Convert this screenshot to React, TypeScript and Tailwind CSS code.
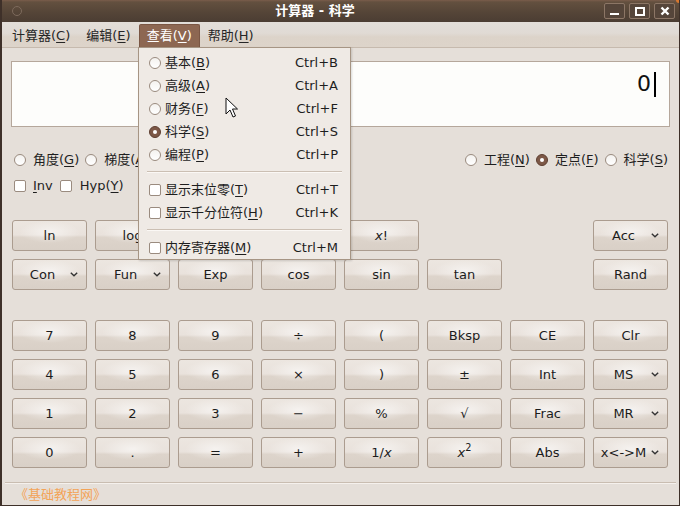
import React from "react";

const Chevron = () => (
  <svg width="8" height="5" viewBox="0 0 8 5" className="shrink-0">
    <path d="M0.8 0.8 L4 3.8 L7.2 0.8" fill="none" stroke="#333" strokeWidth="1.4" />
  </svg>
);

const btnBg =
  "bg-[radial-gradient(ellipse_42%_38%_at_50%_38%,rgba(255,255,255,0.55),rgba(255,255,255,0)),linear-gradient(#ece6e0_0%,#e9e2dc_48%,#ddd4cb_56%,#d9d0c7_100%)]";

const Btn = ({ children, dd }: { children?: React.ReactNode; dd?: boolean }) =>
  dd ? (
    <div
      className={`h-[31px] rounded-[3px] border border-[#ab9c8f] ${btnBg} flex items-center pl-[2px] pr-[8px] text-[13px] text-[#1c1c1c]`}
    >
      <span className="flex-1 text-center whitespace-nowrap">{children}</span>
      <Chevron />
    </div>
  ) : (
    <div
      className={`h-[31px] rounded-[3px] border border-[#ab9c8f] ${btnBg} flex items-center justify-center text-[13px] text-[#1c1c1c] whitespace-nowrap`}
    >
      {children}
    </div>
  );

const Empty = () => <div className="h-[31px]" />;

const Radio = ({ checked }: { checked?: boolean }) =>
  checked ? (
    <span className="w-[12px] h-[12px] rounded-full bg-[#7d5847] border border-[#5e3f31] flex items-center justify-center shrink-0">
      <span className="w-[4px] h-[4px] rounded-full bg-white" />
    </span>
  ) : (
    <span className="w-[12px] h-[12px] rounded-full bg-[linear-gradient(#f4f2ef,#ffffff)] border border-[#9a8b7f] shrink-0" />
  );

const Check = () => (
  <span className="w-[12px] h-[12px] rounded-[2px] bg-white border border-[#9a8b7f] shrink-0" />
);

const M = ({ t, k }: { t: string; k: string }) => (
  <span className="whitespace-nowrap">
    {t}(<span className="underline underline-offset-2">{k}</span>)
  </span>
);

const MenuItem = ({
  ind,
  label,
  k,
  sc,
}: {
  ind: React.ReactNode;
  label: string;
  k: string;
  sc: string;
}) => (
  <div className="h-[23px] flex items-center pl-[10px] pr-[12px]">
    {ind}
    <span className="ml-[4px] flex-1">
      <M t={label} k={k} />
    </span>
    <span>{sc}</span>
  </div>
);

const Sep = () => (
  <div className="h-[12px] flex flex-col justify-center px-[8px]">
    <div className="h-[1px] bg-[#cbbfb3]" />
    <div className="h-[1px] bg-[#fbf8f5]" />
  </div>
);

export default function App() {
  return (
    <div className="w-[680px] h-[506px] relative overflow-hidden bg-[#e5dfd9] flex flex-col font-['DejaVu_Sans','Noto_Sans_CJK_SC',sans-serif] text-[13px] text-[#1e1e1e] border-l-2 border-r border-b border-[#3e3029]">
      {/* title bar */}
      <div className="h-[22px] shrink-0 flex items-center bg-[linear-gradient(#7a5d4b_0px,#63503f_2px,#544437_60%,#4b3d33_100%)] relative">
        <div className="w-[30px] flex items-center pl-[10px]">
          <span className="w-[10px] h-[10px] rounded-full border border-[#7d6a5c]" />
        </div>
        <div className="flex-1 text-center text-white font-bold text-[13px] pr-[6px]">
          计算器 - 科学
        </div>
        <div className="flex items-center gap-[4px] pr-[4px]">
          <div className="w-[21px] h-[16px] rounded-[2px] border border-[#8c7666] bg-[#55453a] flex items-end justify-center pb-[3px]">
            <span className="w-[9px] h-[2px] bg-white" />
          </div>
          <div className="w-[21px] h-[16px] rounded-[2px] border border-[#8c7666] bg-[#55453a] flex items-center justify-center">
            <span className="w-[10px] h-[9px] border-2 border-white" />
          </div>
          <div className="w-[21px] h-[16px] rounded-[2px] border border-[#8c7666] bg-[#55453a] flex items-center justify-center">
            <svg width="10" height="10" viewBox="0 0 10 10">
              <path d="M1.5 1.5 L8.5 8.5 M8.5 1.5 L1.5 8.5" stroke="white" strokeWidth="2.4" />
            </svg>
          </div>
        </div>
        <div className="absolute right-0 top-0 w-[3px] h-[3px] bg-[#d8782f] rounded-bl-full" />
      </div>

      {/* menu bar */}
      <div className="h-[26px] shrink-0 flex items-start pt-[2px] pl-[2px] bg-[linear-gradient(#e3ded9_0%,#e0dad4_45%,#dcd3c9_60%,#ddd4ca_100%)] border-b border-[#c6baae] text-[#262626]">
        <div className="h-[23px] px-[8px] flex items-center">
          <M t="计算器" k="C" />
        </div>
        <div className="h-[23px] px-[8px] flex items-center">
          <M t="编辑" k="E" />
        </div>
        <div className="h-[23px] px-[7px] flex items-center bg-[#8d6752] text-white rounded-t-[2px] border border-[#7a5644] border-b-0">
          <M t="查看" k="V" />
        </div>
        <div className="h-[23px] px-[8px] flex items-center">
          <M t="帮助" k="H" />
        </div>
      </div>

      {/* display */}
      <div className="mt-[13px] mx-[9px] h-[66px] shrink-0 bg-[#fdfdfb] border border-[#b5a79b] flex justify-end items-start pt-[9px] pr-[13px]">
        <span className="text-[22px] leading-[26px] text-[#111] font-['DejaVu_Sans',sans-serif]">0</span>
        <span className="ml-[3px] mt-[1px] w-[2px] h-[25px] bg-black" />
      </div>

      {/* radio row */}
      <div className="mt-[23px] h-[20px] shrink-0 flex items-center pl-[12px] pr-[11px]">
        <Radio />
        <span className="ml-[7px] mr-[6px]">
          <M t="角度" k="G" />
        </span>
        <Radio />
        <span className="ml-[7px] mr-[6px]">
          <M t="梯度" k="A" />
        </span>
        <div className="flex-1" />
        <Radio />
        <span className="ml-[7px] mr-[6px]">
          <M t="工程" k="N" />
        </span>
        <Radio checked />
        <span className="ml-[7px] mr-[6px]">
          <M t="定点" k="F" />
        </span>
        <Radio />
        <span className="ml-[7px]">
          <M t="科学" k="S" />
        </span>
      </div>

      {/* checkbox row */}
      <div className="mt-[6px] h-[20px] shrink-0 flex items-center pl-[12px]">
        <Check />
        <span className="ml-[7px] mr-[7px]">
          <span className="underline underline-offset-2">I</span>nv
        </span>
        <Check />
        <span className="ml-[8px]">
          Hyp(<span className="underline underline-offset-2">Y</span>)
        </span>
      </div>

      {/* scientific buttons */}
      <div className="mt-[24px] pl-[10px] grid grid-cols-[repeat(8,75px)] gap-x-[8px] gap-y-[8px] shrink-0">
        <Btn>ln</Btn>
        <Btn>log</Btn>
        <Btn />
        <Btn />
        <Btn>
          <i>x</i>!
        </Btn>
        <Empty />
        <Empty />
        <Btn dd>Acc</Btn>

        <Btn dd>Con</Btn>
        <Btn dd>Fun</Btn>
        <Btn>Exp</Btn>
        <Btn>cos</Btn>
        <Btn>sin</Btn>
        <Btn>tan</Btn>
        <Empty />
        <Btn>Rand</Btn>
      </div>

      {/* number buttons */}
      <div className="mt-[30px] pl-[10px] grid grid-cols-[repeat(8,75px)] gap-x-[8px] gap-y-[8px] shrink-0">
        <Btn>7</Btn>
        <Btn>8</Btn>
        <Btn>9</Btn>
        <Btn>÷</Btn>
        <Btn>(</Btn>
        <Btn>Bksp</Btn>
        <Btn>CE</Btn>
        <Btn>Clr</Btn>

        <Btn>4</Btn>
        <Btn>5</Btn>
        <Btn>6</Btn>
        <Btn>×</Btn>
        <Btn>)</Btn>
        <Btn>±</Btn>
        <Btn>Int</Btn>
        <Btn dd>MS</Btn>

        <Btn>1</Btn>
        <Btn>2</Btn>
        <Btn>3</Btn>
        <Btn>−</Btn>
        <Btn>%</Btn>
        <Btn>√</Btn>
        <Btn>Frac</Btn>
        <Btn dd>MR</Btn>

        <Btn>0</Btn>
        <Btn>.</Btn>
        <Btn>=</Btn>
        <Btn>+</Btn>
        <Btn>
          1/<i>x</i>
        </Btn>
        <Btn>
          <i>x</i>
          <sup>2</sup>
        </Btn>
        <Btn>Abs</Btn>
        <Btn dd>x&lt;-&gt;M</Btn>
      </div>

      {/* status */}
      <div className="mt-[14px] mx-[3px] shrink-0">
        <div className="h-[1px] bg-[#c9bdb1]" />
        <div className="h-[1px] bg-[#f5f1ed]" />
      </div>
      <div className="flex-1 flex items-center pl-[13px] text-[#f3a357] text-[13px]">《基础教程网》</div>

      {/* dropdown menu */}
      <div className="absolute left-[136px] top-[47px] w-[213px] h-[213px] bg-[#efeae5] border border-[#a69584] pt-[3px] shadow-[1px_1px_2px_rgba(0,0,0,0.15)]">
        <MenuItem ind={<Radio />} label="基本" k="B" sc="Ctrl+B" />
        <MenuItem ind={<Radio />} label="高级" k="A" sc="Ctrl+A" />
        <MenuItem ind={<Radio />} label="财务" k="F" sc="Ctrl+F" />
        <MenuItem ind={<Radio checked />} label="科学" k="S" sc="Ctrl+S" />
        <MenuItem ind={<Radio />} label="编程" k="P" sc="Ctrl+P" />
        <Sep />
        <MenuItem ind={<Check />} label="显示末位零" k="T" sc="Ctrl+T" />
        <MenuItem ind={<Check />} label="显示千分位符" k="H" sc="Ctrl+K" />
        <Sep />
        <MenuItem ind={<Check />} label="内存寄存器" k="M" sc="Ctrl+M" />
      </div>

      {/* mouse pointer */}
      <svg className="absolute left-[223px] top-[97px]" width="14" height="22" viewBox="0 0 14 22">
        <path
          d="M1 1 L1 17 L5 13 L8 20 L10.5 19 L7.5 12 L12.5 12 Z"
          fill="white"
          stroke="#111"
          strokeWidth="1"
          strokeLinejoin="round"
        />
      </svg>
    </div>
  );
}
